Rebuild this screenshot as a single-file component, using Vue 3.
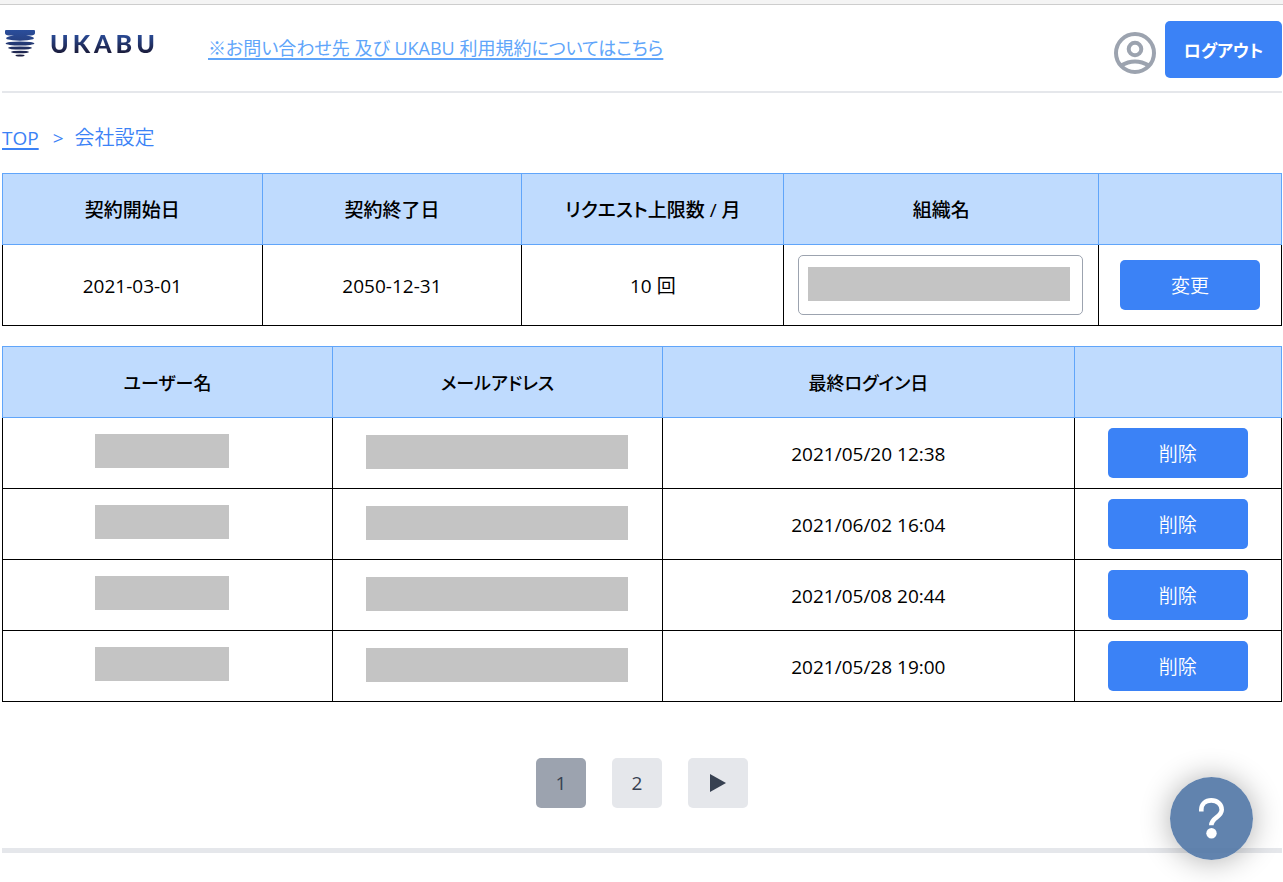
<script setup>
const contractHeads = ['契約開始日', '契約終了日', 'リクエスト上限数 / 月', '組織名', '']
const userHeads = ['ユーザー名', 'メールアドレス', '最終ログイン日', '']
const users = [
  { id: 1, lastLogin: '2021/05/20 12:38' },
  { id: 2, lastLogin: '2021/06/02 16:04' },
  { id: 3, lastLogin: '2021/05/08 20:44' },
  { id: 4, lastLogin: '2021/05/28 19:00' },
]
</script>

<template>
  <div class="strip"></div>
  <div class="page">
    <header class="header">
      <a class="logo" href="#" aria-label="UKABU">
        <svg class="mark" viewBox="0 0 32 28" aria-hidden="true">
          <defs>
            <linearGradient id="mark-fill" x1="0" y1="0" x2="0" y2="28" gradientUnits="userSpaceOnUse">
              <stop offset="0" stop-color="#2b4f9e" />
              <stop offset="0.35" stop-color="#284488" />
              <stop offset="1" stop-color="#1b1c3c" />
            </linearGradient>
          </defs>
          <g fill="url(#mark-fill)">
            <path d="M1 2Q1 1 2 1H30Q31 1 31 2V4Q31 6.400 27 6.600H22Q27 7 29.500 8.500Q30.500 9.500 29 10.300Q24 11.700 16 11.700T3 10.300Q1.500 9.500 2.500 8.500Q5 7 10 6.600H5Q1 6.400 1 4Z" />
            <ellipse cx="16" cy="14.500" rx="14.300" ry="2" />
            <ellipse cx="16" cy="19" rx="12" ry="1.600" />
            <ellipse cx="16" cy="23" rx="9" ry="1.300" />
            <ellipse cx="16" cy="26.500" rx="4.500" ry="1" />
          </g>
        </svg>
        <span class="wordmark">UKABU</span>
      </a>
      <a class="terms" href="#">※お問い合わせ先 及び UKABU 利用規約についてはこちら</a>
      <div class="account">
        <svg class="avatar" viewBox="0 0 42 42" fill="none" stroke="#9ca3af" stroke-width="4" aria-hidden="true">
          <circle cx="21" cy="21" r="19" />
          <circle cx="21" cy="17" r="6.300" />
          <path d="M7 33.500Q21 25.300 35 33.500" />
        </svg>
        <button class="btn logout" type="button">ログアウト</button>
      </div>
    </header>

    <nav class="crumbs" aria-label="パンくず">
      <a href="#">TOP</a>
      <span class="sep">&gt;</span>
      <span class="current">会社設定</span>
    </nav>

    <table class="grid">
      <colgroup>
        <col class="c-date" /><col class="c-date" /><col class="c-limit" /><col class="c-org" /><col />
      </colgroup>
      <thead>
        <tr><th v-for="(h, i) in contractHeads" :key="i">{{ h }}</th></tr>
      </thead>
      <tbody>
        <tr class="tall">
          <td>2021-03-01</td>
          <td>2050-12-31</td>
          <td>10 回</td>
          <td class="org">
            <div class="field">
              <input type="text" aria-label="組織名" />
              <span class="mask wide"></span>
            </div>
          </td>
          <td><button class="btn action" type="button">変更</button></td>
        </tr>
      </tbody>
    </table>

    <table class="grid users">
      <colgroup>
        <col class="c-name" /><col class="c-name" /><col class="c-login" /><col />
      </colgroup>
      <thead>
        <tr><th v-for="(h, i) in userHeads" :key="i">{{ h }}</th></tr>
      </thead>
      <tbody>
        <tr v-for="u in users" :key="u.id">
          <td class="name"><span class="mask"></span></td>
          <td class="mail"><span class="mask wide"></span></td>
          <td>{{ u.lastLogin }}</td>
          <td><button class="btn action" type="button">削除</button></td>
        </tr>
      </tbody>
    </table>

    <nav class="pager" aria-label="ページ">
      <button class="pg active" type="button" aria-current="page">1</button>
      <button class="pg" type="button">2</button>
      <button class="pg next" type="button" aria-label="次へ">
        <svg viewBox="0 0 16 18" aria-hidden="true"><path d="M0 0L16 9L0 18Z" fill="#374151" /></svg>
      </button>
    </nav>
    <hr class="rule" />
  </div>

  <button class="help" type="button" aria-label="ヘルプ">
    <svg viewBox="0 0 83 83" aria-hidden="true">
      <path d="M31.300 34.500V32.800C31.300 27 35.600 23.400 41.300 23.400C47.200 23.400 51.700 27.300 51.700 32.800C51.700 40.300 41.300 40.500 41.300 48.300" fill="none" stroke="#fff" stroke-width="4.600" />
      <circle cx="41.500" cy="56.200" r="5.200" fill="#fff" />
    </svg>
  </button>
</template>

<style>
body {
  margin: 0;
  background: #fff;
}
</style>

<style scoped>
.strip {
  height: 4px;
  background: #f4f4f4;
  border-bottom: 1px solid #cdcdcd;
}
.page,
.btn,
.pg {
  font-family: "Open Sans", "Noto Sans CJK JP", sans-serif;
  font-size: 19px;
  font-feature-settings: "palt";
}
.page {
  margin: 0 1px 0 2px;
  line-height: 30px;
  color: #000;
}
.header {
  display: flex;
  align-items: flex-start;
  padding: 16px 0 13px;
  border-bottom: 2px solid #e5e7eb;
}
.logo {
  display: flex;
  align-items: center;
  gap: 14px;
  width: 206px;
  padding: 8px 0 0 2px;
  box-sizing: border-box;
  text-decoration: none;
}
.mark {
  width: 32px;
  height: 28px;
}
.wordmark {
  font-family: Lato, sans-serif;
  font-weight: 900;
  font-size: 25px;
  line-height: 28px;
  letter-spacing: 4px;
  color: transparent;
  background: linear-gradient(#2b4f9e 15%, #1b1c3c 85%);
  -webkit-background-clip: text;
  background-clip: text;
}
.terms {
  padding-top: 12px;
  font-size: 18px;
  color: #60a5fa;
  text-decoration-thickness: 2px;
  text-underline-offset: 3px;
}
.account {
  display: flex;
  align-items: center;
  gap: 9px;
  margin-left: auto;
}
.avatar {
  width: 42px;
  height: 42px;
  padding-top: 6px;
}
.btn {
  border: 0;
  border-radius: 5px;
  background: #3b82f6;
  color: #fff;
  cursor: pointer;
}
.logout {
  min-width: 117px;
  height: 57px;
  padding: 0 18px;
  font-size: 17px;
  font-weight: 700;
}
.action {
  display: block;
  width: 140px;
  height: 50px;
  margin: 0 auto;
  padding: 0;
  font-weight: 350;
}
.crumbs {
  display: flex;
  margin: 30px 0 20px;
  color: #3b82f6;
}
.crumbs a {
  color: inherit;
  text-decoration-thickness: 2px;
  text-underline-offset: 3px;
}
.sep {
  padding: 0 11px 0 14px;
}
.current {
  font-size: 20px;
  font-weight: 350;
}
.grid {
  width: 100%;
  table-layout: fixed;
  border-collapse: collapse;
  text-align: center;
}
.users {
  margin-top: 20px;
}
.c-date {
  width: 20.3%;
}
.c-limit {
  width: 20.5%;
}
.c-org {
  width: 24.6%;
}
.c-name {
  width: 25.8%;
}
.c-login {
  width: 32.2%;
}
th {
  height: 68px;
  padding: 2px 0 0;
  border: 1px solid #60a5fa;
  background: #bfdbfe;
  font-weight: 500;
}
.users th {
  font-size: 18px;
}
td {
  height: 68px;
  padding: 2px 0 0;
  border: 1px solid #000;
}
.tall td {
  height: 78px;
}
td:last-child,
td.org {
  padding: 0;
}
.org .field {
  position: relative;
  margin: 0 15px 0 14px;
}
.field input {
  display: block;
  width: 100%;
  height: 60px;
  padding: 0 10px;
  box-sizing: border-box;
  border: 1px solid #9ca3af;
  border-radius: 5px;
  background: #fff;
  font: inherit;
}
.mask {
  display: inline-block;
  vertical-align: middle;
  width: 134px;
  height: 34px;
  background: #c4c4c4;
}
.wide {
  width: 262px;
}
.field .mask {
  position: absolute;
  left: 10px;
  top: 12px;
}
td.name {
  padding: 0 10px 6px 0;
}
td.mail {
  padding: 0 0 4px;
}
.name,
.mail {
  height: 64px;
  line-height: 34px;
}
.pager {
  display: flex;
  justify-content: center;
  gap: 26px;
  margin: 56px 0 40px;
}
.pg {
  display: flex;
  align-items: center;
  justify-content: center;
  width: 50px;
  height: 50px;
  padding: 0;
  border: 0;
  border-radius: 5px;
  background: #e5e7eb;
  color: #374151;
  cursor: pointer;
}
.pg.active {
  background: #9ca3af;
}
.pg.next {
  width: 60px;
}
.next svg {
  width: 16px;
  height: 18px;
}
.rule {
  height: 5px;
  margin: 0;
  border: 0;
  background: #e5e7eb;
}
.help {
  position: fixed;
  right: 30px;
  bottom: 22px;
  width: 83px;
  height: 83px;
  padding: 0;
  border: 0;
  border-radius: 50%;
  background: rgba(80, 117, 165, 0.9);
  box-shadow: 0 1px 30px rgba(0, 0, 0, 0.32);
  cursor: pointer;
}
.help svg {
  display: block;
  width: 100%;
}
</style>
